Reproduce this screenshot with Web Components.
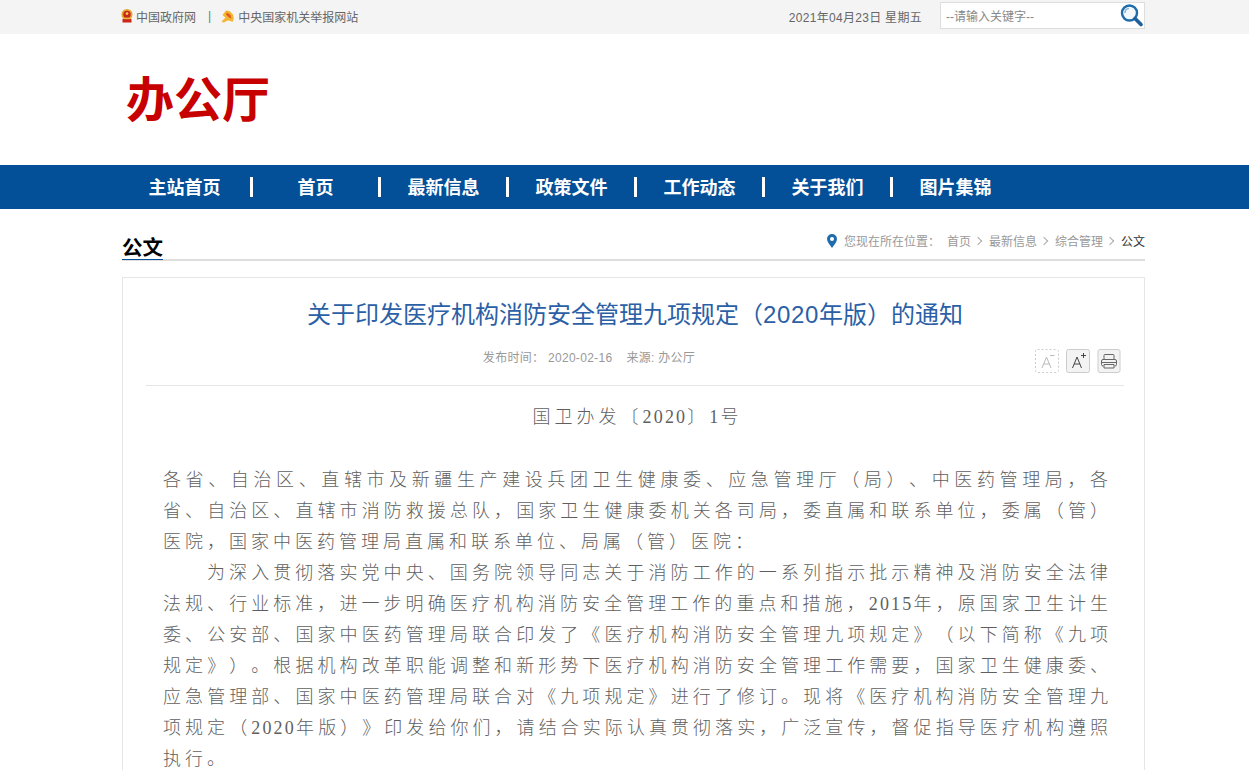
<!DOCTYPE html>
<html lang="zh">
<head>
<meta charset="utf-8">
<title>办公厅</title>
<style>
  html, body { margin: 0; padding: 0; background: #fff; overflow: hidden; height: 770px; }
  body { font-family: "Liberation Sans", "Noto Sans CJK SC", sans-serif; }
  article-card p { margin: 0; font: 300 18px/31px "Liberation Serif", "Noto Sans CJK SC", serif; letter-spacing: 4px; color: #5f5f5f; text-align: justify; text-spacing-trim: space-all; }
  article-card p.no { text-align: center; padding: 16px 0 32px; }
  article-card p.indent { text-indent: 44px; }
  article-card p i { font-style: normal; letter-spacing: 2.2px; }
</style>
</head>
<body>
<top-bar></top-bar>
<site-logo>办公厅</site-logo>
<main-nav>
  <nav-item first>主站首页</nav-item>
  <nav-item>首页</nav-item>
  <nav-item>最新信息</nav-item>
  <nav-item>政策文件</nav-item>
  <nav-item>工作动态</nav-item>
  <nav-item>关于我们</nav-item>
  <nav-item last>图片集锦</nav-item>
</main-nav>
<crumb-head>公文</crumb-head>
<article-card>
  <span slot="title">关于印发医疗机构消防安全管理九项规定（<span style="letter-spacing:.7px">2020</span>年版）的通知</span>
  <p class="no">国卫办发〔<i>2020</i>〕<i>1</i>号</p>
  <p>各省、自治区、直辖市及新疆生产建设兵团卫生健康委、应急管理厅（局）、中医药管理局，各省、自治区、直辖市消防救援总队，国家卫生健康委机关各司局，委直属和联系单位，委属（管）医院，国家中医药管理局直属和联系单位、局属（管）医院：</p>
  <p class="indent">为深入贯彻落实党中央、国务院领导同志关于消防工作的一系列指示批示精神及消防安全法律法规、行业标准，进一步明确医疗机构消防安全管理工作的重点和措施，<i>2015</i>年，原国家卫生计生委、公安部、国家中医药管理局联合印发了《医疗机构消防安全管理九项规定》（以下简称《九项规定》）。根据机构改革职能调整和新形势下医疗机构消防安全管理工作需要，国家卫生健康委、应急管理部、国家中医药管理局联合对《九项规定》进行了修订。现将《医疗机构消防安全管理九项规定（<i>2020</i>年版）》印发给你们，请结合实际认真贯彻落实，广泛宣传，督促指导医疗机构遵照执行。</p>
</article-card>
<script>
class TopBar extends HTMLElement {
  constructor() {
    super();
    this.attachShadow({ mode: "open" });
    this.shadowRoot.innerHTML = `
      <style>
        :host { display: block; height: 34px; background: #f4f4f4; font-size: 12px; color: #666; }
        .wrap { width: 1024px; margin-left: 121px; height: 32px; display: flex; align-items: center; }
        .link { display: flex; align-items: center; gap: 4px; }
        .link:first-child { gap: 3px; }
        .sep { margin: 0 10px 0 12px; color: #3f8f7f; }
        .date { margin-left: auto; margin-right: 18px; letter-spacing: .3px; }
        .search { width: 198px; height: 25px; border: 1px solid #ddd; background: #fff; display: flex; align-items: center; justify-content: space-between; padding-left: 5px; margin-top: -2px; }
        .search span { color: #888; font-size: 12px; }
        svg { display: block; }
      </style>
      <div class="wrap">
        <div class="link">
          <svg width="12" height="14" viewBox="0 0 12 14"><circle cx="6" cy="5.5" r="5.5" fill="#e3a72f"/><circle cx="6" cy="5.5" r="3.7" fill="#c8261a"/><circle cx="6" cy="4.6" r="1.4" fill="#f2cf5a"/><rect x="1.5" y="10" width="9" height="3.5" fill="#c8261a"/><rect x="3" y="8.6" width="6" height="1.6" fill="#e8b83a"/></svg>
          <span>中国政府网</span>
        </div>
        <span class="sep">|</span>
        <div class="link">
          <svg width="13" height="13" viewBox="0 0 13 13"><path d="M5 .5 8.5 1 12 4.5 12.8 8.5 11.5 12 9 10.8 6.5 10.5 3 12.5.5 12 2.5 9.5 4.5 7.5 1.5 5Z" fill="#f3b52f"/><path d="M6 2.5 9.5 5 10.3 8.5 8 7.5 5 4.5Z" fill="#e0591f"/></svg>
          <span>中央国家机关举报网站</span>
        </div>
        <span class="date">2021年04月23日 星期五</span>
        <div class="search">
          <span>--请输入关键字--</span>
          <svg width="25" height="24" viewBox="0 0 25 24"><circle cx="10.5" cy="10" r="7.5" fill="#f2f8fc" stroke="#1f6cab" stroke-width="2.4"/><path d="M6 10a4.5 4.5 0 0 1 4-4.5" fill="none" stroke="#8db8d8" stroke-width="1.6"/><path d="M16 15.5 22 21.5" stroke="#1f5f9c" stroke-width="3.6" stroke-linecap="round"/></svg>
        </div>
      </div>`;
  }
}

class SiteLogo extends HTMLElement {
  constructor() {
    super();
    this.attachShadow({ mode: "open" });
    this.shadowRoot.innerHTML = `
      <style>
        :host { display: block; height: 131px; box-sizing: border-box; padding: 29px 0 0 126px; font: 700 48px/66px "Noto Sans CJK SC", sans-serif; color: #c70000; }
      </style>
      <slot></slot>`;
  }
}

class MainNav extends HTMLElement {
  constructor() {
    super();
    this.attachShadow({ mode: "open" });
    this.shadowRoot.innerHTML = `
      <style>
        :host { display: flex; height: 44px; padding-left: 121px; background: #034f98; }
      </style>
      <slot></slot>`;
  }
}

class NavItem extends HTMLElement {
  constructor() {
    super();
    this.attachShadow({ mode: "open" });
    this.shadowRoot.innerHTML = `
      <style>
        :host { display: flex; align-items: center; width: 128px; color: #fff; font: 700 18px "Noto Sans CJK SC", sans-serif; }
        :host([first]) { width: 132px; }
        :host([first]) .label { padding-right: 2px; }
        .label { flex: 1; text-align: center; margin-top: -2px; }
        .bar { width: 2.5px; height: 20px; background: #fff; margin-right: .5px; }
        :host([last]) .bar { display: none; }
        :host([last]) .label { padding-right: 3px; }
      </style>
      <span class="label"><slot></slot></span><span class="bar"></span>`;
  }
}

class CrumbHead extends HTMLElement {
  constructor() {
    super();
    this.attachShadow({ mode: "open" });
    this.shadowRoot.innerHTML = `
      <style>
        :host { display: flex; justify-content: space-between; align-items: flex-end; width: 1023px; height: 52px; margin: 0 0 16px 122px; border-bottom: 2px solid #dedede; box-sizing: border-box; }
        .name { font: 700 20.5px/25px "Noto Sans CJK SC", sans-serif; padding: 4px 0 0 0; color: #000; border-bottom: 1px solid #034f98; margin-bottom: -1px; }
        .path { display: flex; align-items: center; align-self: flex-start; margin-top: 23px; font-size: 12px; color: #999; }
        .path b { font-weight: 400; color: #333; }
        .arrow { width: 5px; height: 5px; border: solid #aaa; border-width: 1px 1px 0 0; transform: rotate(45deg); margin: 0 8px 0 4px; }
        svg { margin-right: 7px; }
      </style>
      <span class="name"><slot></slot></span>
      <div class="path">
        <svg width="10" height="14" viewBox="0 0 10 14"><path d="M5 0a5 5 0 0 1 5 5c0 3-3 6-5 9C3 11 0 8 0 5a5 5 0 0 1 5-5Z" fill="#1f6cab"/><circle cx="5" cy="5" r="2" fill="#fff"/></svg>
        <span style="margin-right:7px">您现在所在位置：</span>
        <span>首页</span><i class="arrow"></i>
        <span>最新信息</span><i class="arrow"></i>
        <span>综合管理</span><i class="arrow"></i>
        <b>公文</b>
      </div>`;
  }
}

class ArticleCard extends HTMLElement {
  constructor() {
    super();
    this.attachShadow({ mode: "open" });
    this.shadowRoot.innerHTML = `
      <style>
        :host { display: block; width: 1023px; margin-left: 122px; border: 1px solid #e6e6e6; box-sizing: border-box; padding: 0 20px 30px 23px; }
        h1 { margin: 0; padding-top: 19px; font: 400 24px/36px "Liberation Sans", "Noto Sans CJK SC", sans-serif; color: #2b5fa6; text-align: center; }
        .meta { position: relative; height: 53px; display: flex; justify-content: center; gap: 14px; padding: 16px 92px 0 0; box-sizing: border-box; font-size: 12px; line-height: 18px; color: #999; border-bottom: 1px solid #e6e6e6; letter-spacing: .3px; }
        .tools { position: absolute; right: 3px; top: 16px; display: flex; gap: 7px; letter-spacing: 0; }
        .tool { width: 24px; height: 24px; display: block; }
        .body { padding: 0 12px 0 17px; }
      </style>
      <h1><slot name="title"></slot></h1>
      <div class="meta">
        <span>发布时间： 2020-02-16</span>
        <span>来源: 办公厅</span>
        <div class="tools">
          <svg class="tool" viewBox="0 0 24 24"><rect x=".5" y=".5" width="23" height="23" rx="2" fill="#fff" stroke="#ccc" stroke-dasharray="2 2"/><path d="M7 19 11.5 8 16 19M8.6 15H14.4" fill="none" stroke="#bbb"/><path d="M15 6.5h4.5" stroke="#bbb"/></svg>
          <svg class="tool" viewBox="0 0 24 24"><rect x=".5" y=".5" width="23" height="23" rx="2" fill="#f3f3f3" stroke="#ccc"/><path d="M6.5 19 11 8 15.5 19M8.1 15H13.9" fill="none" stroke="#444"/><path d="M15 6.5h5M17.5 4v5" stroke="#444"/></svg>
          <svg class="tool" viewBox="0 0 23 24"><rect x=".5" y=".5" width="22" height="23" rx="2" fill="#f3f3f3" stroke="#ccc"/><path d="M6.5 10.5V6.5a1 1 0 0 1 1-1h8a1 1 0 0 1 1 1v4M6 17H5.5a1.5 1.5 0 0 1-1.5-1.5v-3.5a1.5 1.5 0 0 1 1.5-1.5h12a1.5 1.5 0 0 1 1.5 1.5v3.5a1.5 1.5 0 0 1-1.5 1.5H17M4 13.5h15M6.5 15.5h10v3.5h-10Z" fill="none" stroke="#666"/></svg>
        </div>
      </div>
      <div class="body"><slot></slot></div>`;
  }
}

customElements.define("top-bar", TopBar);
customElements.define("site-logo", SiteLogo);
customElements.define("main-nav", MainNav);
customElements.define("nav-item", NavItem);
customElements.define("crumb-head", CrumbHead);
customElements.define("article-card", ArticleCard);
</script>
</body>
</html>
